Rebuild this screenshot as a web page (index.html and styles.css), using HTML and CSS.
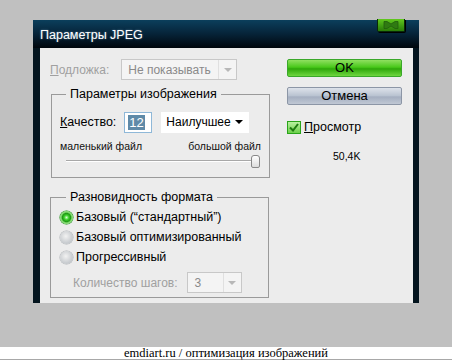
FILE: index.html
```html
<!DOCTYPE html>
<html lang="ru">
<head>
  <meta charset="UTF-8" />
  <title>Параметры JPEG</title>
  <link rel="stylesheet" href="styles.css">
</head>
<body>

  <div class="window">
    <div class="titlebar">
      <span class="title">Параметры JPEG</span>
      <span class="close-btn">
        <svg width="26" height="12" viewBox="0 0 26 12">
          <path d="M6 2.5 L9 2.5 L13 5 L17 2.5 L20 2.5 L20 9.5 L17 9.5 L13 7 L9 9.5 L6 9.5 Z" fill="#2f7a12" stroke="#215e0c" stroke-width="0.8"/>
        </svg>
      </span>
    </div>

    <div class="content">
      <div class="left">

        <!-- Подложка -->
        <div class="matte-row">
          <span class="disabled-label"><u>П</u>одложка:</span>
          <div class="select disabled matte-select">
            <span>Не показывать</span>
            <span class="arrow-box"><span class="arrow"></span></span>
          </div>
        </div>

        <!-- Image options -->
        <fieldset class="group group-image">
          <legend>Параметры изображения</legend>
          <div class="quality-row">
            <span class="label"><u>К</u>ачество:</span>
            <div class="num-input"><span class="sel">12</span></div>
            <div class="select quality-select">
              <span>Наилучшее</span>
              <span class="arrow dark"></span>
            </div>
          </div>
          <div class="size-labels">
            <span>маленький файл</span>
            <span>большой файл</span>
          </div>
          <div class="slider">
            <div class="track"></div>
            <div class="thumb"></div>
          </div>
        </fieldset>

        <!-- Format options -->
        <fieldset class="group group-format">
          <legend>Разновидность формата</legend>
          <div class="radio-row">
            <span class="radio on"></span>
            <span>Базовый (“стандартный”)</span>
          </div>
          <div class="radio-row">
            <span class="radio"></span>
            <span>Базовый оптимизированный</span>
          </div>
          <div class="radio-row">
            <span class="radio"></span>
            <span>Прогрессивный</span>
          </div>
          <div class="scans-row">
            <span class="disabled-label">Количество шагов:</span>
            <div class="select disabled scans-select">
              <span>3</span>
              <span class="arrow-box"><span class="arrow"></span></span>
            </div>
          </div>
        </fieldset>
      </div>

      <div class="right">
        <button class="btn btn-ok">OK</button>
        <button class="btn btn-cancel">Отмена</button>
        <div class="preview-row">
          <span class="checkbox">
            <svg width="10" height="9" viewBox="0 0 10 9">
              <path d="M1 4.5 L4 7.5 L9 1" fill="none" stroke="#1e7a10" stroke-width="2"/>
            </svg>
          </span>
          <span><u>П</u>росмотр</span>
        </div>
        <div class="filesize">50,4K</div>
      </div>
    </div>
  </div>

  <div class="caption">emdiart.ru / оптимизация изображений</div>

</body>
</html>
```

FILE: styles.css
```css
body {
  margin: 0;
  padding: 0;
  background: #c0c0c0;
  font-family: "Liberation Sans", Arial, sans-serif;
  font-size: 12px;
  color: #000;
}
u {
  text-decoration: underline;
}
.window {
  margin: 20px 0 0 33px;
  width: 386px;
  height: 283px;
  background: #03141e;
  display: flex;
  flex-direction: column;
}
.titlebar {
  height: 28px;
  display: flex;
  align-items: flex-start;
  justify-content: space-between;
  background: linear-gradient(#0b3f5c, #062338 50%, #00060c);
}
.title {
  color: #fff;
  font-size: 12.5px;
  margin: 8px 0 0 7px;
  text-shadow: 0 0 2px rgba(140, 190, 220, 0.6);
}
.close-btn {
  margin: -1px 14px 0 0;
  width: 26px;
  height: 12px;
  border: 1px solid #0a2a08;
  border-top: none;
  border-radius: 0 0 2px 2px;
  background: linear-gradient(#62c81e, #3d9a12 60%, #2b7c08);
  display: flex;
  box-shadow: 1px 1px 0 #000;
}
.content {
  flex: 1;
  margin: 0 6px 0 7px;
  background: #ececec;
  display: flex;
}
.left {
  width: 230px;
  padding-left: 10px;
}
.matte-row {
  display: flex;
  align-items: center;
  margin-top: 11px;
  height: 21px;
}
.disabled-label {
  color: #a0a0a0;
}
.select {
  display: flex;
  align-items: center;
  justify-content: space-between;
  background: #fff;
  box-sizing: border-box;
  padding-left: 6px;
}
.select.disabled {
  border: 1px solid #c8c8c8;
  background: #f4f4f4;
  color: #8a8a8a;
}
.matte-select {
  margin-left: 12px;
  width: 116px;
  height: 21px;
}
.arrow-box {
  width: 17px;
  height: 100%;
  border-left: 1px solid #e0e0e0;
  display: flex;
  align-items: center;
  justify-content: center;
}
.arrow {
  width: 0;
  height: 0;
  border-left: 4px solid transparent;
  border-right: 4px solid transparent;
  border-top: 4px solid #b8b8b8;
}
.arrow.dark {
  border-top-color: #000;
  margin-right: 6px;
}
.group {
  margin: 0;
  border: 1px solid #9a9a9a;
  padding: 0 0 0 8px;
  box-sizing: border-box;
}
.group legend {
  padding: 0 4px;
  margin-left: 6px;
  line-height: 16px;
  font-size: 12.5px;
}
.group-image {
  margin: 6px 0 0 1px;
  width: 219px;
  height: 92px;
}
.quality-row {
  display: flex;
  align-items: center;
  margin-top: 9px;
  height: 22px;
}
.label {
  font-size: 12.5px;
}
.num-input {
  margin-left: 8px;
  width: 28px;
  height: 21px;
  box-sizing: border-box;
  border: 1px solid #8fb8d8;
  background: #fff;
  display: flex;
  align-items: center;
  padding-left: 3px;
  font-size: 13px;
}
.num-input .sel {
  background: #5f8aa8;
  color: #fff;
  line-height: 15px;
  padding: 0 1px;
}
.quality-select {
  margin-left: 9px;
  width: 88px;
  height: 21px;
  font-size: 12px;
  padding-left: 5px;
}
.size-labels {
  display: flex;
  justify-content: space-between;
  font-size: 10.5px;
  color: #111;
  margin: 7px 8px 0 0;
}
.slider {
  position: relative;
  height: 14px;
  margin: 2px 11px 0 6px;
}
.track {
  position: absolute;
  left: 0;
  right: 0;
  top: 6px;
  height: 2px;
  border-top: 1px solid #a8a8a8;
  border-bottom: 1px solid #fff;
  box-sizing: border-box;
}
.thumb {
  position: absolute;
  right: -2px;
  top: 1px;
  width: 7px;
  height: 11px;
  border: 1px solid #888;
  border-radius: 3px 3px 2px 2px;
  background: linear-gradient(#fff, #dcdcdc);
}
.group-format {
  margin-top: 11px;
  width: 219px;
  height: 109px;
  padding-left: 9px;
}
.radio-row {
  display: flex;
  align-items: center;
  height: 20px;
  gap: 3px;
  font-size: 12.5px;
}
.radio-row:first-of-type {
  margin-top: 2px;
}
.radio {
  width: 13px;
  height: 13px;
  border-radius: 50%;
  background: radial-gradient(circle at 45% 40%, #f2f2f2, #c4c8cc 70%, #a8acb2);
  box-shadow: 0 0 0 0.5px #b0b4b8;
}
.radio.on {
  background: radial-gradient(circle, #d8ffd0 0, #3dd02a 25%, #1e9a14 45%, #8ee07a 60%, #2aa41a 100%);
  box-shadow: 0 0 0 0.5px #188a10;
}
.scans-row {
  display: flex;
  align-items: center;
  margin: 5px 0 0 13px;
  height: 21px;
}
.scans-select {
  margin-left: 9px;
  width: 55px;
  height: 21px;
  padding-left: 7px;
}
.right {
  padding-left: 7px;
  display: flex;
  flex-direction: column;
  align-items: flex-start;
}
.btn {
  width: 115px;
  height: 18px;
  font-family: inherit;
  font-size: 13px;
  padding: 0;
  border-radius: 2px;
  line-height: 16px;
}
.btn-ok {
  margin-top: 11px;
  border: 1px solid #3aa82a;
  background: linear-gradient(#8fe060, #48c81a 45%, #2ea80a 55%, #6fd640);
}
.btn-cancel {
  margin-top: 10px;
  border: 1px solid #8c96a6;
  background: linear-gradient(#dde2ea, #b8c2d0 50%, #a4aec0 55%, #c0c8d4);
}
.preview-row {
  display: flex;
  align-items: center;
  gap: 3px;
  margin-top: 15px;
  font-size: 12.5px;
}
.checkbox {
  width: 12px;
  height: 11px;
  border: 1px solid #2aa41a;
  background: linear-gradient(#b8f0a0, #6cd04a);
  display: flex;
  align-items: center;
  justify-content: center;
}
.filesize {
  margin: 16px 0 0 46px;
  font-size: 10.5px;
}
.caption {
  margin-top: 44px;
  height: 12px;
  background: #fff;
  border-bottom: 1px solid #a8a8a8;
  text-align: center;
  font-family: "Liberation Serif", "Times New Roman", serif;
  font-size: 12.5px;
  line-height: 12px;
  white-space: nowrap;
}
```
